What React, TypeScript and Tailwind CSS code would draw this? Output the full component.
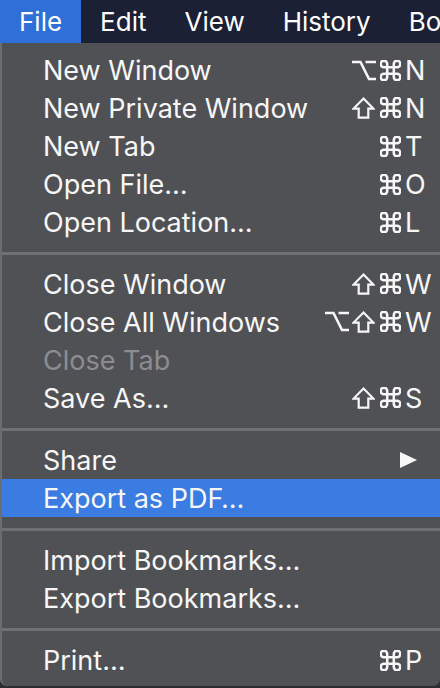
import React from 'react'

type Mod = 'opt' | 'shift' | 'cmd'

type Item = {
  label: string
  mods?: Mod[]
  keyChar?: string
  disabled?: boolean
  active?: boolean
  submenu?: boolean
}

const groups: Item[][] = [
  [
    { label: 'New Window', mods: ['opt', 'cmd'], keyChar: 'N' },
    { label: 'New Private Window', mods: ['shift', 'cmd'], keyChar: 'N' },
    { label: 'New Tab', mods: ['cmd'], keyChar: 'T' },
    { label: 'Open File…', mods: ['cmd'], keyChar: 'O' },
    { label: 'Open Location…', mods: ['cmd'], keyChar: 'L' },
  ],
  [
    { label: 'Close Window', mods: ['shift', 'cmd'], keyChar: 'W' },
    { label: 'Close All Windows', mods: ['opt', 'shift', 'cmd'], keyChar: 'W' },
    { label: 'Close Tab', disabled: true },
    { label: 'Save As…', mods: ['shift', 'cmd'], keyChar: 'S' },
  ],
  [
    { label: 'Share', submenu: true },
    { label: 'Export as PDF…', active: true },
  ],
  [
    { label: 'Import Bookmarks…' },
    { label: 'Export Bookmarks…' },
  ],
  [{ label: 'Print…', mods: ['cmd'], keyChar: 'P' }],
]

const menus = ['File', 'Edit', 'View', 'History', 'Bookmarks']

// modifier glyphs drawn as strokes, the font versions are too thin
function ModIcon({ mod }: { mod: Mod }) {
  if (mod === 'opt') {
    return (
      <svg width="24" height="21" viewBox="0 0 24 21" fill="none" stroke="#f7f7f7" strokeWidth="2.6">
        <path d="M0 2H8.5L17 19H24M13.5 2H24" />
      </svg>
    )
  }
  if (mod === 'shift') {
    return (
      <svg width="23" height="22" viewBox="0 0 23 22" fill="none" stroke="#f7f7f7" strokeWidth="2.2" strokeLinejoin="miter">
        <path d="M11.5 1.6L21.4 11.6H16.3V20.7H6.7V11.6H1.6Z" />
      </svg>
    )
  }
  return (
    <svg width="21" height="21" viewBox="2.4 2.4 19.2 19.2" fill="none" stroke="#f7f7f7" strokeWidth="2.3">
      <path d="M15 6v12a3 3 0 1 0 3-3H6a3 3 0 1 0 3 3V6a3 3 0 1 0-3 3h12a3 3 0 1 0-3-3" />
    </svg>
  )
}

function MenuRow({ item }: { item: Item }) {
  return (
    <div
      className={
        'flex h-[38px] items-center pl-[41px] pr-[10px] ' +
        (item.active ? 'bg-[#3a7ce2] ' : '') +
        (item.disabled ? 'text-[#8c8d90]' : 'text-[#f7f7f7]')
      }
    >
      <span className="flex-1 whitespace-nowrap">{item.label}</span>
      {item.keyChar && (
        <span className="flex items-center">
          <span className="flex justify-end">
            {item.mods!.map((m, i) => (
              <span key={i} className="flex w-[27px] justify-center">
                <ModIcon mod={m} />
              </span>
            ))}
          </span>
          <span className="w-[26px] pl-[1px]">{item.keyChar}</span>
        </span>
      )}
      {item.submenu && (
        <svg width="17" height="16" viewBox="0 0 17 16" className="mr-[13px]">
          <path d="M0 0 L17 8 L0 16 Z" fill="#f7f7f7" />
        </svg>
      )}
    </div>
  )
}

export default function App() {
  return (
    <div className="h-[688px] w-[440px] overflow-hidden bg-[#2c2d31] font-['Inter',sans-serif] text-[27px] leading-none">
      <div className="flex h-[43px] items-center bg-[#1b2035] text-[26px] text-white">
        {menus.map((m, i) => (
          <div
            key={m}
            className={
              'flex h-full shrink-0 items-center px-[19px] whitespace-nowrap ' +
              (i === 0 ? 'bg-[#2f6fd8]' : '')
            }
          >
            {m}
          </div>
        ))}
      </div>
      <div className="h-[643px] w-[440px] rounded-b-[7px] border-l-2 border-[#6c6d70] bg-[#505155] pt-[8px] pb-[7px]">
        {groups.map((g, gi) => (
          <div key={gi}>
            {gi > 0 && (
              <div className="pt-[11px] pb-[10px]">
                <div className="h-[3px] bg-[#6f7073]" />
              </div>
            )}
            {g.map((item) => (
              <MenuRow key={item.label} item={item} />
            ))}
          </div>
        ))}
      </div>
    </div>
  )
}
